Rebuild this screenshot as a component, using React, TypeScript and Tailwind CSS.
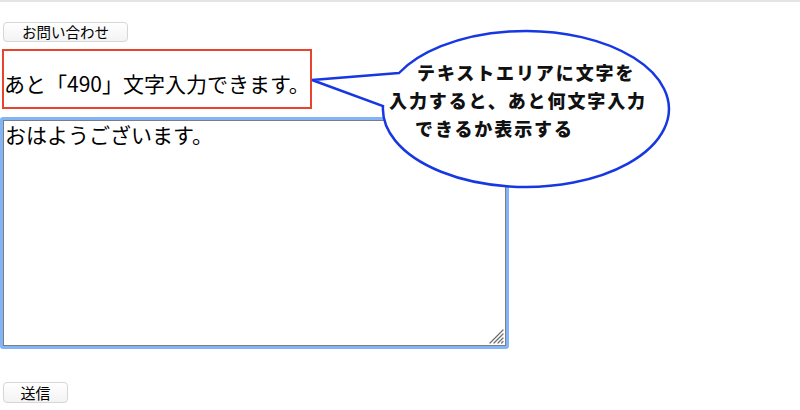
import React from "react";

const jp = { fontFamily: '"Noto Sans CJK JP", "Noto Sans", sans-serif' };

export default function App() {
  return (
    <div
      className="relative w-[800px] h-[410px] overflow-hidden bg-white border-t-2 border-[#e4e4e4] text-black"
      style={jp}
    >
      <div className="flex flex-col items-start">
        <button className="ml-[3px] mt-[20px] w-[125px] h-[20px] rounded-[4px] border border-[#d6d6d6] bg-gradient-to-b from-white to-[#f3f3f3] text-[14.5px] leading-none flex items-center justify-center">
          お問い合わせ
        </button>
        <div className="ml-[2px] mt-[7px] w-[310px] h-[60px] border-2 border-[#e8432d] flex items-center pt-[8px] pl-0 text-[21px] leading-none whitespace-nowrap">
          あと「490」文字入力できます。
        </div>
        <div className="mt-[8px] w-[509px] h-[232px] border-[3px] border-[#82b4f8] rounded-[3px]">
          <div className="relative w-full h-full border border-[#7d7d7d] bg-white pl-[1px] pt-[1px] text-[21px] leading-[24px]">
            おはようございます。
            <svg
              className="absolute right-[1px] bottom-[1px]"
              width="16"
              height="16"
              viewBox="0 0 16 16"
            >
              <g stroke="#6f6f6f" strokeWidth="1.2" strokeLinecap="round">
                <line x1="2" y1="15" x2="15" y2="2" />
                <line x1="6" y1="15" x2="15" y2="6" />
                <line x1="10" y1="15" x2="15" y2="10" />
                <line x1="13.5" y1="15" x2="15" y2="13.5" />
              </g>
            </svg>
          </div>
        </div>
        <button className="ml-[3px] mt-[33px] w-[65px] h-[21px] rounded-[4px] border border-[#d6d6d6] bg-gradient-to-b from-white to-[#f3f3f3] text-[15px] leading-none flex items-center justify-center">
          送信
        </button>
      </div>

      <svg
        className="absolute left-0 top-[-2px] pointer-events-none"
        width="800"
        height="410"
        viewBox="0 0 800 410"
      >
        <path
          d="M 399 73 L 312 80 L 383 106 A 143 78 0 1 0 399 73 Z"
          fill="#ffffff"
          stroke="#1637e2"
          strokeWidth="2.5"
          strokeLinejoin="miter"
        />
        <g
          fontFamily='"Noto Sans CJK JP", sans-serif'
          fontWeight="900"
          fontSize="18"
          letterSpacing="1.9"
          fill="#111"
        >
          <text x="417" y="80">テキストエリアに文字を</text>
          <text x="389" y="108">入力すると、あと何文字入力</text>
          <text x="415" y="136">できるか表示する</text>
        </g>
      </svg>
    </div>
  );
}
